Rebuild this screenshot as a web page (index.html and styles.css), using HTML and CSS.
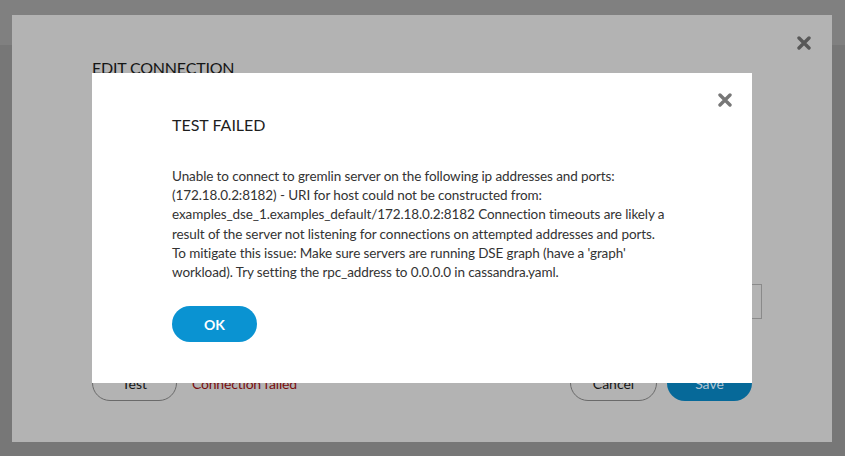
FILE: index.html
```html
<!DOCTYPE html>
<html lang="en">
<head>
<meta charset="utf-8">
<title>Test failed</title>
<link rel="stylesheet" href="styles.css">
</head>
<body>
<div class="page">
  <header class="page-header"></header>
  <main class="page-main"></main>
</div>

<div class="backdrop">
  <section class="edit-modal">
    <button class="close close-outer" aria-label="Close">
      <svg viewBox="0 0 14 14" width="14" height="14"><path d="M2 2 L12 12 M12 2 L2 12" /></svg>
    </button>
    <h2 class="edit-title">EDIT CONNECTION</h2>
    <div class="edit-form">
      <input class="field" type="text" value="">
    </div>
    <div class="edit-footer">
      <button class="btn btn-outline">Test</button>
      <span class="status">Connection failed</span>
      <span class="spacer"></span>
      <button class="btn btn-outline btn-cancel">Cancel</button>
      <button class="btn btn-save">Save</button>
    </div>
  </section>
</div>

<section class="alert" role="alertdialog">
  <button class="close close-inner" aria-label="Close">
    <svg viewBox="0 0 14 14" width="14" height="14"><path d="M2 2 L12 12 M12 2 L2 12" /></svg>
  </button>
  <h3 class="alert-title">TEST FAILED</h3>
  <p class="alert-text">Unable to connect to gremlin server on the following ip addresses and ports:<br>(172.18.0.2:8182) - URI for host could not be constructed from:<br>examples_dse_1.examples_default/172.18.0.2:8182 Connection timeouts are likely a<br>result of the server not listening for connections on attempted addresses and ports.<br>To mitigate this issue: Make sure servers are running DSE graph (have a 'graph'<br>workload). Try setting the rpc_address to 0.0.0.0 in cassandra.yaml.</p>
  <button class="btn btn-ok">OK</button>
</section>
</body>
</html>
```

FILE: styles.css
```css
* { box-sizing: border-box; }

html, body {
  margin: 0;
  padding: 0;
  height: 100%;
  overflow: hidden;
}

body {
  font-family: "Lato", "Liberation Sans", sans-serif;
  font-size: 14px;
  color: #333;
}

.page {
  display: grid;
  grid-template-rows: 45px 1fr;
  height: 100vh;
}

.page-header { background: #808080; }
.page-main { background: #777777; }

.backdrop {
  position: fixed;
  inset: 0;
  padding: 15px 13px 14px 12px;
  display: flex;
}

.edit-modal {
  position: relative;
  flex: 1;
  background: #b3b3b3;
  display: flex;
  flex-direction: column;
  padding: 42px 80px 41px 80px;
}

.close {
  position: absolute;
  border: 0;
  background: none;
  padding: 0;
  width: 14px;
  height: 14px;
  cursor: pointer;
}

.close svg { display: block; }
.close path { fill: none; stroke-width: 3.4; stroke-linecap: round; }

.close-outer { top: 21px; right: 21px; }
.close-outer path { stroke: #585858; }

.edit-title {
  margin: 0;
  font-size: 16px;
  font-weight: 400;
  line-height: 22px;
  letter-spacing: -0.2px;
  color: #151515;
}

.edit-form {
  flex: 1;
  display: flex;
  flex-direction: column;
  justify-content: flex-end;
  padding-bottom: 46px;
}

.field {
  align-self: flex-end;
  width: 300px;
  height: 35px;
  margin-right: -10px;
  border: 1px solid #8a8a8a;
  background: #b3b3b3;
}

.edit-footer {
  display: flex;
  align-items: center;
  gap: 10px;
}

.spacer { flex: 1; }

.btn {
  font-family: inherit;
  font-size: 14px;
  height: 36px;
  border-radius: 18px;
  cursor: pointer;
}

.btn-outline {
  width: 85px;
  border: 1px solid #6a6a6a;
  background: transparent;
  color: #151515;
}

.btn-cancel { width: 87px; }

.status {
  margin-left: 5px;
  color: #7a0d0d;
  letter-spacing: -0.2px;
}

.btn-save {
  width: 85px;
  border: 0;
  background: #066999;
  color: #b5c6d3;
}

.alert {
  position: fixed;
  top: 73px;
  left: 92px;
  width: 660px;
  height: 310px;
  background: #fff;
  padding: 41px 80px 0 80px;
}

.close-inner { top: 20px; right: 20px; }
.close-inner path { stroke: #777; }

.alert-title {
  margin: 0;
  font-size: 16px;
  font-weight: 400;
  line-height: 22px;
  color: #1e1e1e;
}

.alert-text {
  margin: 31px 0 0 0;
  font-size: 13.5px;
  letter-spacing: -0.1px;
  line-height: 19.2px;
  white-space: nowrap;
  color: #333;
}

.btn-ok {
  margin-top: 24px;
  width: 85px;
  border: 0;
  background: #0a93d2;
  color: #fff;
  font-weight: 700;
}
```
